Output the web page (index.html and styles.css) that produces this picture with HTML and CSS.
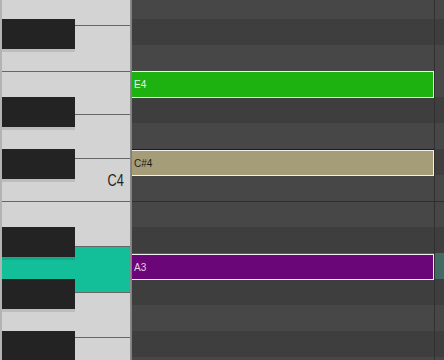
FILE: index.html
```html
<!DOCTYPE html>
<html lang="en">
<head>
  <meta charset="UTF-8">
  <meta name="viewport" content="width=device-width, initial-scale=1.0">
  <title>Piano Roll</title>
  <link rel="stylesheet" href="styles.css">
</head>
<body>
  <div class="roll">
    <!-- keyboard on the left -->
    <div class="keyboard">
      <div class="white-keys">
        <div class="wkey h45">&nbsp;</div>
        <div class="wkey h46">&nbsp;</div>
        <div class="wkey h43">&nbsp;</div>
        <div class="wkey h44">&nbsp;</div>
        <div class="wkey h43 c-key"><span class="key-label">C4</span></div>
        <div class="wkey h45">&nbsp;</div>
        <div class="wkey h46 active">&nbsp;</div>
        <div class="wkey h45">&nbsp;</div>
        <div class="wkey h46">&nbsp;</div>
      </div>
      <div class="bkey" style="top: 19px;"></div>
      <div class="bkey" style="top: 97px;"></div>
      <div class="bkey" style="top: 149px;"></div>
      <div class="bkey" style="top: 227px;"></div>
      <div class="bkey" style="top: 279px;"></div>
      <div class="bkey" style="top: 331px;"></div>
    </div>
    <div class="divider"></div>

    <!-- note grid -->
    <div class="grid">
      <div class="rows">
        <div class="row light"></div>
        <div class="row dark"></div>
        <div class="row light"></div>
        <div class="row light"></div>
        <div class="row dark"></div>
        <div class="row light"></div>
        <div class="row dark"></div>
        <div class="row light"></div>
        <div class="row light octave"></div>
        <div class="row dark"></div>
        <div class="row light selected"></div>
        <div class="row dark"></div>
        <div class="row light"></div>
        <div class="row dark"></div>
        <div class="row light"></div>
      </div>
      <div class="bar-line"></div>

      <div class="note green" style="top: 71px; height: 27px;">E4</div>
      <div class="note tan" style="top: 150px; height: 26px;">C#4</div>
      <div class="note purple" style="top: 254px; height: 26px;">A3</div>
    </div>
  </div>
</body>
</html>
```

FILE: styles.css
```css
* {
  box-sizing: border-box;
}
body {
  margin: 0;
  padding: 0;
  background: #3f3f3f;
  font-family: 'Liberation Sans', Arial, sans-serif;
  overflow: hidden;
}
.roll {
  display: flex;
  width: 444px;
  height: 360px;
  overflow: hidden;
}
.keyboard {
  position: relative;
  width: 130px;
  height: 360px;
  overflow: hidden;
  background: #d3d3d3;
  border-left: 2px solid #b2b4b4;
}
.white-keys {
  display: flex;
  flex-direction: column;
  margin-top: -20px;
}
.wkey {
  border-top: 1px solid #666;
  background: #d3d3d3;
  display: flex;
  justify-content: flex-end;
  align-items: flex-start;
}
.h43 { height: 43px; }
.h44 { height: 44px; }
.h45 { height: 45px; }
.h46 { height: 46px; }
.wkey.active {
  background: #13bf99;
}
.key-label {
  display: inline-block;
  font-size: 17px;
  line-height: 16px;
  color: #1e1e1e;
  margin-top: 14px;
  margin-right: 6px;
  transform: scaleX(0.75);
  transform-origin: right top;
}
.bkey {
  position: absolute;
  left: 0;
  width: 73px;
  height: 33px;
  background: #232323;
  border-bottom: 3px solid rgba(0, 0, 0, 0.1);
  background-clip: padding-box;
}
.divider {
  width: 2px;
  height: 360px;
  border-left: 1px solid #8c8c8c;
  background: #3f9d89;
}
.grid {
  position: relative;
  flex: 1;
  height: 360px;
  overflow: hidden;
}
.rows {
  display: flex;
  flex-direction: column;
  margin-top: -7px;
}
.row {
  height: 26px;
}
.row.light {
  background: #474747;
}
.row.dark {
  background: #3e3e3e;
}
.row.octave {
  border-top: 1px solid #2e2e2e;
}
.row.selected {
  background: #416b62;
}
.bar-line {
  position: absolute;
  top: 0;
  left: 302px;
  width: 1px;
  height: 360px;
  background: #303030;
}
.note {
  position: absolute;
  left: -2px;
  width: 304px;
  border: 1px solid #f0f0f0;
  font-size: 10px;
  padding-left: 3px;
  display: flex;
  align-items: center;
}
.note.tan {
  box-shadow: 0 -1px 0 #1a1a1a;
}
.note.green {
  background: #1db20f;
  color: #e6f6e4;
}
.note.tan {
  background: #a59d78;
  color: #1c1c1c;
}
.note.purple {
  background: #6a0677;
  color: #e8cdee;
}
```
